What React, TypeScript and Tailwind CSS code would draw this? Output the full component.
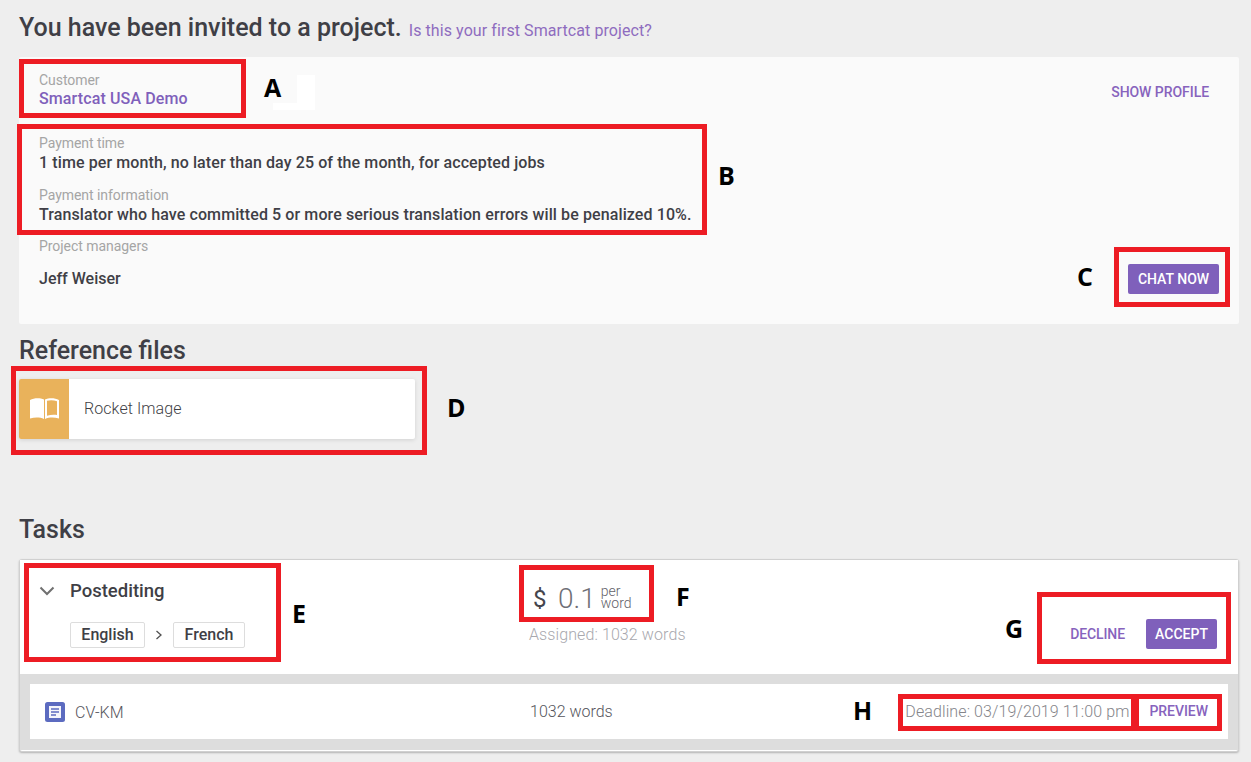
const ink = "text-[#3f3f46]";

function Field({ label, value, className }: { label: string; value: string; className?: string }) {
  return (
    <div className={className}>
      <div className="text-[14px] leading-[16px] tracking-[-0.05px] text-[#a5a5a5]">{label}</div>
      <div className={`mt-[2px] text-[16px] leading-[19px] font-medium tracking-[0.1px] ${ink}`}>{value}</div>
    </div>
  );
}

function Note({ className }: { className: string }) {
  return <div className={`pointer-events-none absolute border-[5px] border-[#ed1c24] ${className}`} />;
}

function Letter({ children, className }: { children: string; className: string }) {
  return (
    <div className={`absolute font-['Open_Sans',sans-serif] text-[25px] leading-[30px] font-bold text-black ${className}`}>
      {children}
    </div>
  );
}

function BookIcon() {
  return (
    <svg width="29" height="22" viewBox="0 0 29 22" fill="white">
      <path d="M0 2C4-.3 10-.5 14 1.500V21c-4-1.800-9-1.800-14-.5V2z" />
      <path d="M15 1.500C19-.5 25-.3 29 2v18.500c-5-1.300-10-1.300-14 .5V1.500zm2 1.300V17.800c3-1 7-1.200 10-.7V3.300c-3-1.200-7-1.400-10-.5z" />
    </svg>
  );
}

function DocIcon() {
  return (
    <svg width="20" height="20" viewBox="0 0 20 20">
      <rect width="20" height="20" rx="2.500" fill="#5c6bc0" />
      <rect x="4" y="4" width="12" height="12" fill="#f4f5fb" />
      <path d="M6 7h8M6 10h8M6 13h5" stroke="#5c6bc0" strokeWidth="1.300" />
    </svg>
  );
}

export default function App() {
  return (
    <div className="relative h-[762px] w-[1251px] overflow-hidden bg-[#eeeeee] font-['Roboto',sans-serif]">
      <div className="flex flex-col pr-3 pl-[19px]">
        <div className="flex h-[57px] items-baseline pt-[12px]">
          <h1 className={`text-[25px] leading-[32px] font-medium ${ink}`}>You have been invited to a project.</h1>
          <a className="ml-[7px] text-[16px] tracking-[0.08px] text-[#8e6cbf]">Is this your first Smartcat project?</a>
        </div>

        <section className="h-[267px] rounded-[2px] bg-[#fafafa] pt-[15px] pr-[30px] pl-[20px]">
          <div className="flex items-start justify-between">
            <div>
              <div className="text-[14px] leading-[16px] tracking-[-0.05px] text-[#a5a5a5]">Customer</div>
              <div className="mt-[1px] text-[16px] leading-[19px] font-medium tracking-[0.12px] text-[#7f60bb]">Smartcat USA Demo</div>
            </div>
            <a className="mt-[12px] text-[14px] leading-[16px] font-medium tracking-[-0.05px] text-[#8763bd]">SHOW PROFILE</a>
          </div>
          <Field className="mt-[27px]" label="Payment time" value="1 time per month, no later than day 25 of the month, for accepted jobs" />
          <Field className="mt-[15px]" label="Payment information" value="Translator who have committed 5 or more serious translation errors will be penalized 10%." />
          <div className="mt-[14px] text-[14px] leading-[16px] tracking-[-0.05px] text-[#a5a5a5]">Project managers</div>
          <div className="mt-[10px] flex items-center justify-between">
            <div className={`text-[16px] font-medium ${ink}`}>Jeff Weiser</div>
            <button className="mr-[-10px] h-[30px] w-[91px] rounded-[2px] bg-[#7f60bb] text-[14px] font-medium text-white">CHAT NOW</button>
          </div>
        </section>

        <h2 className={`mt-[12px] text-[25px] leading-[30px] font-medium ${ink}`}>Reference files</h2>
        <div className="mt-[13px] flex h-[60px] w-[396px] overflow-hidden rounded-[2px] bg-white shadow-[0_1px_4px_rgba(0,0,0,0.12)]">
          <div className="flex w-[50px] items-center justify-center bg-[#e9b25b]">
            <BookIcon />
          </div>
          <div className={`ml-[15px] self-center text-[16px] font-light tracking-[0.08px] ${ink}`}>Rocket Image</div>
        </div>

        <h2 className={`mt-[76px] text-[25px] leading-[30px] font-medium ${ink}`}>Tasks</h2>
        <section className="mt-[14px] h-[193px] w-[1220px] rounded-[3px] border border-[#d0d0d0] bg-white shadow-[0_1px_2px_rgba(0,0,0,0.25)]">
          <div className="flex h-[114px] bg-white">
            <div className="w-[509px] pt-[20px] pl-[19px]">
              <div className="flex items-center">
                <svg width="16" height="10" viewBox="0 0 16 10" fill="none" stroke="#707070" strokeWidth="2">
                  <path d="M1.500 1.500 8 8l6.500-6.500" />
                </svg>
                <div className={`ml-[15px] text-[18.500px] leading-[22px] font-medium ${ink}`}>Postediting</div>
              </div>
              <div className="mt-[20px] ml-[31px] flex items-center">
                <span className={`flex h-[26px] w-[75px] items-center justify-center rounded-[2px] border border-[#dddddd] text-[16px] font-medium ${ink}`}>English</span>
                <svg className="mx-[10px]" width="8" height="10" viewBox="0 0 8 10" fill="none" stroke="#505050" strokeWidth="1.300">
                  <path d="M1.500 1 6 5l-4.500 4" />
                </svg>
                <span className={`flex h-[26px] w-[72px] items-center justify-center rounded-[2px] border border-[#dddddd] text-[16px] font-medium ${ink}`}>French</span>
              </div>
            </div>
            <div className="pt-[19px]">
              <div className="flex items-center text-[#62626a]">
                <span className="ml-[4px] w-[14px] text-[24px] leading-[40px] font-normal text-[#45454c]">$</span>
                <span className="ml-[11px] text-[28px] leading-[40px] font-light text-[#6f6f76]">0.1</span>
                <span className="mb-[4px] ml-[5px] text-[14px] leading-[12px] font-light">per<br />word</span>
              </div>
              <div className="mt-[6px] text-[16px] leading-[19px] font-light tracking-[0.1px] text-[#a8a8ae]">Assigned: 1032 words</div>
            </div>
            <div className="ml-auto flex items-start pt-[59px] pr-[21px]">
              <button className="mr-[21px] h-[30px] text-[14px] font-medium tracking-[-0.1px] text-[#8763bd]">DECLINE</button>
              <button className="h-[30px] w-[71px] rounded-[2px] bg-[#7f60bb] text-[14px] font-medium text-white">ACCEPT</button>
            </div>
          </div>
          <div className="h-[76px] bg-[#dddddd] px-[10px] pt-[10px]">
            <div className="flex h-[55px] items-center bg-white pr-[20px] pl-[15px]">
              <DocIcon />
              <div className="mt-[2px] ml-[10px] w-[455px] text-[16px] font-light text-[#55555c]">CV-KM</div>
              <div className="text-[16px] font-light text-[#55555c]">1032 words</div>
              <div className="ml-auto text-[16px] font-light tracking-[0.1px] text-[#85858a]">Deadline: 03/19/2019 11:00 pm</div>
              <button className="ml-[20px] text-[14px] font-medium tracking-[-0.05px] text-[#8763bd]">PREVIEW</button>
            </div>
          </div>
        </section>
      </div>

      <Note className="top-[59px] left-[19px] h-[59px] w-[227px]" />
      <Note className="top-[124px] left-[17px] h-[111px] w-[690px]" />
      <Note className="top-[247px] left-[1114px] h-[60px] w-[116px]" />
      <Note className="top-[366px] left-[11px] h-[89px] w-[416px]" />
      <Note className="top-[563px] left-[24px] h-[99px] w-[257px]" />
      <Note className="top-[565px] left-[519px] h-[57px] w-[135px]" />
      <Note className="top-[592px] left-[1037px] h-[72px] w-[194px]" />
      <Note className="top-[694px] left-[898px] h-[37px] w-[238px]" />
      <Note className="top-[694px] left-[1134px] h-[37px] w-[88px]" />

      <div className="absolute top-[75px] left-[297px] h-[35px] w-[18px] bg-white" />
      <div className="absolute top-[103px] left-[273px] h-[7px] w-[24px] bg-white" />

      <Letter className="top-[72px] left-[264px]">A</Letter>
      <Letter className="top-[160px] left-[718px]">B</Letter>
      <Letter className="top-[261px] left-[1077px]">C</Letter>
      <Letter className="top-[392px] left-[447px]">D</Letter>
      <Letter className="top-[598px] left-[292px]">E</Letter>
      <Letter className="top-[581px] left-[676px]">F</Letter>
      <Letter className="top-[613px] left-[1005px]">G</Letter>
      <Letter className="top-[695px] left-[853px]">H</Letter>
    </div>
  );
}
